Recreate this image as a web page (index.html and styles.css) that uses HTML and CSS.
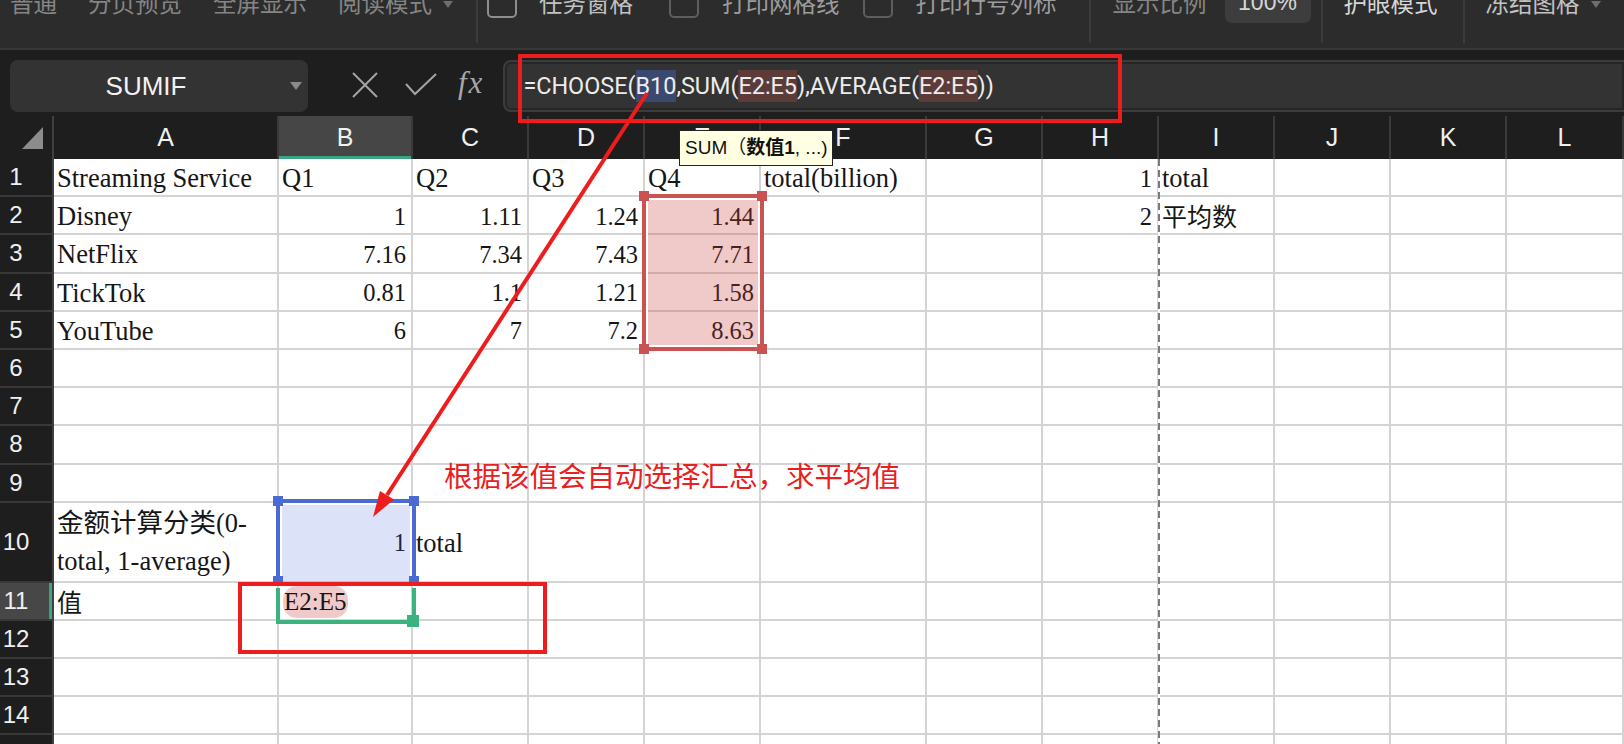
FILE: index.html
```html
<!DOCTYPE html>
<html lang="zh">
<head>
<meta charset="utf-8">
<title>CHOOSE</title>
<link rel="stylesheet" href="styles.css">
</head>
<body>
<div class="toolbar">
  <span class="tb dim ml10">普通</span>
  <span class="tb dim ml31">分页预览</span>
  <span class="tb dim ml31">全屏显示</span>
  <span class="tb dim ml31">阅读模式</span>
  <span class="caret ml11"></span>
  <i class="vdiv ml23"></i>
  <span class="cb cb-light ml9"></span>
  <span class="tb light ml22">任务窗格</span>
  <span class="cb ml36"></span>
  <span class="tb mid ml23">打印网格线</span>
  <span class="cb ml23"></span>
  <span class="tb mid ml23">打印行号列标</span>
  <i class="vdiv ml32"></i>
  <span class="tb dim ml22">显示比例</span>
  <span class="zoombox ml18"><span class="tb bright">100%</span></span>
  <i class="vdiv ml10"></i>
  <span class="tb bright ml21">护眼模式</span>
  <i class="vdiv ml25"></i>
  <span class="tb light ml21">冻结图格</span>
  <span class="caret ml11"></span>
</div>

<div class="fbar">
  <div class="namebox"><span class="name">SUMIF</span><span class="nb-caret"></span></div>
  <svg class="ic-x" width="26" height="26" viewBox="0 0 26 26"><path d="M1 1 L25 25 M25 1 L1 25" stroke="#a4a4a4" stroke-width="2" fill="none"/></svg>
  <svg class="ic-ok" width="32" height="23" viewBox="0 0 32 23"><path d="M1 11 L10 21 L31 1" stroke="#a4a4a4" stroke-width="2" fill="none"/></svg>
  <span class="fx">fx</span>
  <div class="finput"><span class="ftext">=CHOOSE(<span class="ref-b">B10</span>,SUM(<span class="ref-e">E2:E5</span>),AVERAGE(<span class="ref-e">E2:E5</span>))</span></div>
</div>

<div class="sheet">
  <div class="h corner"><span class="tri"></span></div>
  <div class="h">A</div><div class="h hsel">B</div><div class="h">C</div><div class="h">D</div><div class="h">E</div><div class="h">F</div><div class="h">G</div><div class="h">H</div><div class="h">I</div><div class="h">J</div><div class="h">K</div><div class="h">L</div>

  <div class="r">1</div>
  <div class="c">Streaming Service</div><div class="c">Q1</div><div class="c">Q2</div><div class="c">Q3</div><div class="c">Q4</div><div class="c">total(billion)</div><div class="c"></div><div class="c n">1</div><div class="c">total</div><div class="c"></div><div class="c"></div><div class="c"></div>

  <div class="r">2</div>
  <div class="c">Disney</div><div class="c n">1</div><div class="c n">1.11</div><div class="c n">1.24</div><div class="c n">1.44</div><div class="c"></div><div class="c"></div><div class="c n">2</div><div class="c cjk">平均数</div><div class="c"></div><div class="c"></div><div class="c"></div>

  <div class="r">3</div>
  <div class="c">NetFlix</div><div class="c n">7.16</div><div class="c n">7.34</div><div class="c n">7.43</div><div class="c n">7.71</div><div class="c"></div><div class="c"></div><div class="c"></div><div class="c"></div><div class="c"></div><div class="c"></div><div class="c"></div>

  <div class="r">4</div>
  <div class="c">TickTok</div><div class="c n">0.81</div><div class="c n">1.1</div><div class="c n">1.21</div><div class="c n">1.58</div><div class="c"></div><div class="c"></div><div class="c"></div><div class="c"></div><div class="c"></div><div class="c"></div><div class="c"></div>

  <div class="r">5</div>
  <div class="c">YouTube</div><div class="c n">6</div><div class="c n">7</div><div class="c n">7.2</div><div class="c n">8.63</div><div class="c"></div><div class="c"></div><div class="c"></div><div class="c"></div><div class="c"></div><div class="c"></div><div class="c"></div>

  <div class="r">6</div>
  <div class="c"></div><div class="c"></div><div class="c"></div><div class="c"></div><div class="c"></div><div class="c"></div><div class="c"></div><div class="c"></div><div class="c"></div><div class="c"></div><div class="c"></div><div class="c"></div>
  <div class="r">7</div>
  <div class="c"></div><div class="c"></div><div class="c"></div><div class="c"></div><div class="c"></div><div class="c"></div><div class="c"></div><div class="c"></div><div class="c"></div><div class="c"></div><div class="c"></div><div class="c"></div>
  <div class="r">8</div>
  <div class="c"></div><div class="c"></div><div class="c"></div><div class="c"></div><div class="c"></div><div class="c"></div><div class="c"></div><div class="c"></div><div class="c"></div><div class="c"></div><div class="c"></div><div class="c"></div>
  <div class="r">9</div>
  <div class="c"></div><div class="c"></div><div class="c"></div><div class="c"></div><div class="c"></div><div class="c"></div><div class="c"></div><div class="c"></div><div class="c"></div><div class="c"></div><div class="c"></div><div class="c"></div>

  <div class="r">10</div>
  <div class="c wrap">金额计算分类(0-<br>total, 1-average)</div><div class="c n">1</div><div class="c">total</div><div class="c"></div><div class="c"></div><div class="c"></div><div class="c"></div><div class="c"></div><div class="c"></div><div class="c"></div><div class="c"></div><div class="c"></div>

  <div class="r rsel">11</div>
  <div class="c cjk">值</div><div class="c"><span class="pill">E2:E5</span></div><div class="c"></div><div class="c"></div><div class="c"></div><div class="c"></div><div class="c"></div><div class="c"></div><div class="c"></div><div class="c"></div><div class="c"></div><div class="c"></div>

  <div class="r">12</div>
  <div class="c"></div><div class="c"></div><div class="c"></div><div class="c"></div><div class="c"></div><div class="c"></div><div class="c"></div><div class="c"></div><div class="c"></div><div class="c"></div><div class="c"></div><div class="c"></div>
  <div class="r">13</div>
  <div class="c"></div><div class="c"></div><div class="c"></div><div class="c"></div><div class="c"></div><div class="c"></div><div class="c"></div><div class="c"></div><div class="c"></div><div class="c"></div><div class="c"></div><div class="c"></div>
  <div class="r">14</div>
  <div class="c"></div><div class="c"></div><div class="c"></div><div class="c"></div><div class="c"></div><div class="c"></div><div class="c"></div><div class="c"></div><div class="c"></div><div class="c"></div><div class="c"></div><div class="c"></div>
  <div class="r">15</div>
  <div class="c"></div><div class="c"></div><div class="c"></div><div class="c"></div><div class="c"></div><div class="c"></div><div class="c"></div><div class="c"></div><div class="c"></div><div class="c"></div><div class="c"></div><div class="c"></div>
</div>

<!-- overlays -->
<div class="pagebreak"></div>

<div class="sel sel-e">
  <i class="hd tl"></i><i class="hd tr"></i><i class="hd bl"></i><i class="hd br"></i>
</div>
<div class="sel sel-b">
  <i class="hd tl"></i><i class="hd tr"></i><i class="hd bl"></i><i class="hd br"></i>
</div>
<div class="sel-g"><i class="fill-hd"></i></div>

<div class="tip">SUM（<b>数值1</b>, ...)</div>

<div class="note">根据该值会自动选择汇总，求平均值</div>

<div class="mark mark-formula"></div>
<div class="mark mark-cell"></div>

<svg class="arrow" width="1624" height="744" viewBox="0 0 1624 744">
  <line x1="647" y1="93" x2="387" y2="495" stroke="#ee1c1c" stroke-width="4"/>
  <polygon points="373,517 394,499.5 380,491" fill="#ee1c1c"/>
</svg>
</body>
</html>
```

FILE: styles.css
```css
* { box-sizing: border-box; margin: 0; padding: 0; }
html, body { width: 1624px; height: 744px; overflow: hidden; }
body {
  position: relative;
  background: #1e1e1e;
  font-family: "Liberation Sans", "Noto Sans CJK SC", sans-serif;
}

/* ---------- top toolbar ---------- */
.toolbar {
  height: 50px;
  background: #2c2c2c;
  border-bottom: 2px solid #383838;
  display: flex;
  align-items: flex-start;
  overflow: hidden;
}
.tb {
  font-family: "Noto Sans CJK SC", sans-serif;
  font-size: 23.5px;
  line-height: 24px;
  margin-top: -10px;
  white-space: nowrap;
}
.dim { color: #858585; }
.mid { color: #9c9c9c; }
.light { color: #c2c2c2; }
.bright { color: #d6d6d6; }
.caret {
  width: 0; height: 0;
  border-left: 5px solid transparent;
  border-right: 5px solid transparent;
  border-top: 7px solid #6e6e6e;
  margin-top: 1px;
}
.vdiv { display: block; width: 2px; height: 43px; background: #3c3c3c; }
.cb {
  width: 30px; height: 30px;
  margin-top: -12px;
  border: 2px solid #5e5e5e;
  border-radius: 5px;
}
.cb-light { border-color: #8e8e8e; }
.zoombox {
  width: 86px; height: 40px;
  margin-top: -17px;
  background: #3d3d3d;
  border-radius: 7px;
  display: flex;
  justify-content: center;
  padding-top: 7px;
}
.zoombox .tb { margin-top: 0; font-family: "Liberation Sans", sans-serif; font-size: 23px; }
.ml9 { margin-left: 9px; } .ml10 { margin-left: 10px; } .ml11 { margin-left: 11px; }
.ml18 { margin-left: 18px; } .ml21 { margin-left: 21px; } .ml22 { margin-left: 22px; }
.ml23 { margin-left: 23px; } .ml25 { margin-left: 25px; } .ml31 { margin-left: 31px; }
.ml32 { margin-left: 32px; } .ml36 { margin-left: 36px; }

/* ---------- formula bar ---------- */
.fbar {
  height: 66px;
  display: flex;
  align-items: flex-start;
  padding: 10px 0 0 10px;
  background: #1e1e1e;
}
.namebox {
  width: 298px; height: 52px;
  background: #333;
  border-radius: 8px;
  display: flex;
  align-items: center;
}
.name {
  flex: 1;
  text-align: center;
  color: #f2f2f2;
  font-size: 26px;
  padding-right: 8px;
}
.nb-caret {
  width: 0; height: 0;
  border-left: 6px solid transparent;
  border-right: 6px solid transparent;
  border-top: 8px solid #8a8a8a;
  margin-right: 6px;
}
.ic-x { margin: 12px 0 0 44px; }
.ic-ok { margin: 13px 0 0 27px; }
.fx {
  margin: 5px 0 0 21px;
  font-family: "Liberation Serif", serif;
  font-style: italic;
  font-size: 31px;
  letter-spacing: 2px;
  line-height: 36px;
  color: #a8a8a8;
}
.finput {
  margin-left: 19px;
  flex: 1;
  height: 52px;
  border: 2px solid #3c3c3c;
  border-right: 0;
  border-radius: 8px 0 0 8px;
  background: #333;
  box-shadow: inset 0 0 0 2px #262626;
  display: flex;
  align-items: center;
  padding-left: 18px;
}
.ftext {
  color: #ececec;
  font-family: Roboto, "Liberation Sans", sans-serif;
  font-size: 23.4px;
  line-height: 32px;
  white-space: nowrap;
}
.ref-b { background: #3b4970; display: inline-block; }
.ref-e { background: #5d3b39; display: inline-block; }

/* ---------- sheet grid ---------- */
.sheet {
  display: grid;
  grid-template-columns: 54px 225px 134px 116px 116px 116px 166px 116px 116px 116px 116px 116px 117px;
  grid-template-rows: 43px repeat(9, 38.2px) 80px repeat(5, 38.2px);
}
.h {
  background: #1e1e1e;
  border-right: 2px solid #3a3a3a;
  color: #f0f0f0;
  font-size: 25px;
  display: flex;
  align-items: center;
  justify-content: center;
}
.hsel { background: #464646; box-shadow: inset 0 -3px 0 #3aa57e; }
.corner { position: relative; border-right: 2px solid #404040; }
.tri {
  position: absolute;
  left: 22px; top: 11px;
  width: 0; height: 0;
  border-left: 21px solid transparent;
  border-bottom: 22px solid #8c8c8c;
}
.r {
  background: #1e1e1e;
  border-right: 2px solid #404040;
  border-bottom: 2px solid #383838;
  color: #f0f0f0;
  font-size: 24px;
  display: flex;
  align-items: center;
  justify-content: center;
  padding-right: 20px;
}
.rsel { background: #474747; box-shadow: inset -3px 0 0 #3aa57e; }
.c {
  background: #fff;
  border-right: 2px solid #d4d4d4;
  border-bottom: 2px solid #d4d4d4;
  display: flex;
  align-items: center;
  padding: 3px 5px 0 3px;
  font-family: "Liberation Serif", "Noto Sans CJK SC", serif;
  font-size: 26.5px;
  color: #161616;
  white-space: nowrap;
}
.n { justify-content: flex-end; font-size: 24.5px; }
.cjk { font-family: "Noto Sans CJK SC", serif; font-size: 25px; padding-top: 0; }
.wrap { white-space: normal; line-height: 38px; padding-top: 0; }
.wrap, .wrap + .c + .c { font-size: 26.5px; }
.pill {
  background: #f0caca;
  border-radius: 14px;
  padding: 0 1px;
  line-height: 32px;
  margin-left: 1px;
  font-size: 25px;
}

/* ---------- overlays ---------- */
.pagebreak {
  position: absolute;
  left: 1158px; top: 159px;
  width: 2px; height: 585px;
  background: repeating-linear-gradient(to bottom, #7a7a7a 0 7px, #fff 7px 11px);
}
.sel { position: absolute; }
.sel-e {
  left: 642px; top: 194px; width: 122px; height: 157px;
  border: 4px solid #c95352;
  background: rgba(200, 60, 60, 0.28);
  box-shadow: inset 0 0 0 2px #fff;
}
.sel-e .hd { background: #c95352; }
.sel-b {
  left: 276px; top: 499px; width: 140px; height: 83px;
  border: 4px solid #4a6bd6;
  border-bottom: 0;
  background: rgba(70, 100, 214, 0.19);
  box-shadow: inset 2px 2px 0 #fff, inset -2px 0 0 #fff;
}
.sel-b .hd { background: #4a6bd6; }
.hd { position: absolute; width: 10px; height: 10px; }
.hd.tl { left: -7px; top: -7px; }
.hd.tr { right: -7px; top: -7px; }
.hd.bl { left: -7px; bottom: -4px; }
.hd.br { right: -7px; bottom: -4px; }
.sel-e .hd.bl, .sel-e .hd.br { bottom: -7px; }
.sel-g {
  position: absolute;
  left: 276px; top: 588px; width: 140px; height: 36px;
  border: 4px solid #3cb27f;
  border-top: 0;
}
.fill-hd {
  position: absolute;
  right: -7px; bottom: -7px;
  width: 12px; height: 12px;
  background: #3cb27f;
}
.tip {
  position: absolute;
  left: 679px; top: 130px;
  width: 154px; height: 36px;
  background: #ffffe1;
  border: 1px solid #222;
  color: #111;
  font-family: "Liberation Sans", "Noto Sans CJK SC", sans-serif;
  font-size: 19px;
  line-height: 34px;
  padding-left: 5px;
  white-space: nowrap;
}
.tip b { font-weight: 700; }
.note {
  position: absolute;
  left: 444px; top: 461px;
  font-family: "Noto Sans CJK SC", sans-serif;
  font-size: 28.5px;
  line-height: 28px;
  color: #e8201f;
  white-space: nowrap;
}
.mark { position: absolute; border: 4px solid #ee1c1c; }
.mark-formula { left: 518px; top: 54px; width: 604px; height: 69px; }
.mark-cell { left: 238px; top: 582px; width: 309px; height: 72px; }
.arrow { position: absolute; left: 0; top: 0; pointer-events: none; }
```
